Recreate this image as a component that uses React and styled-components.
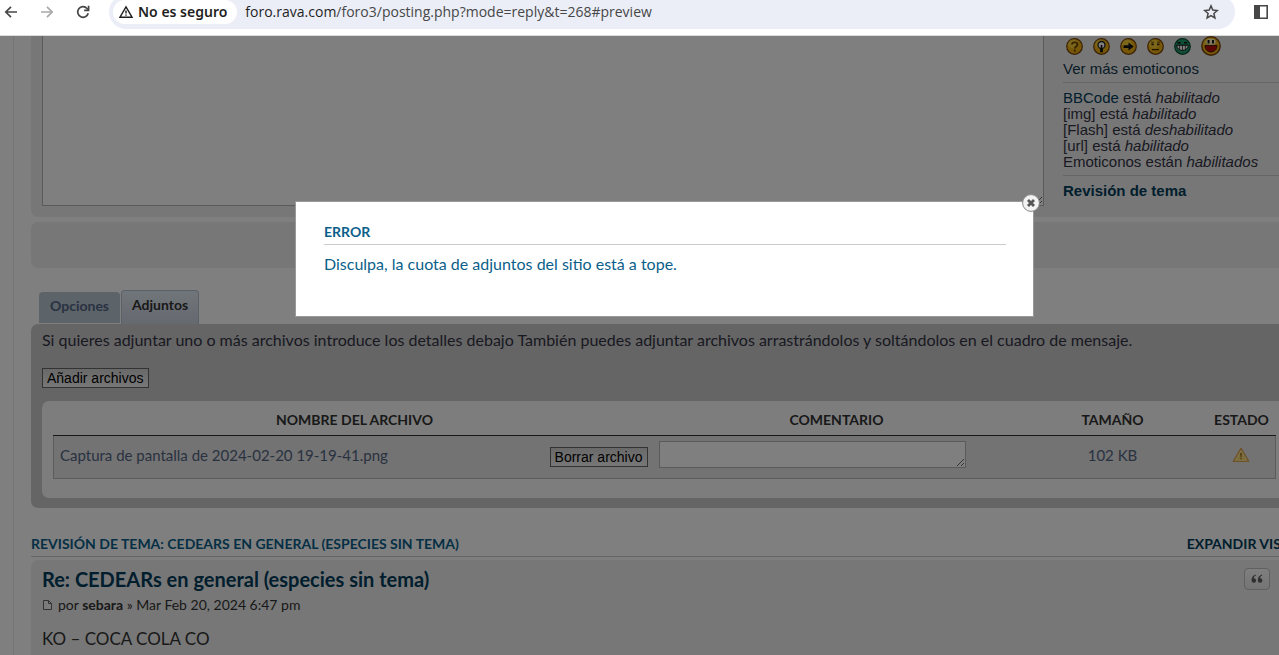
import React from "react";
import styled, { createGlobalStyle, css } from "styled-components";

const EMOTICONS = ["question", "idea", "arrow", "neutral", "mrgreen", "biggrin"];

const STATUS = [
    { name: "BBCode", link: true, verb: "está", value: "habilitado" },
    { name: "[img]", verb: "está", value: "habilitado" },
    { name: "[Flash]", verb: "está", value: "deshabilitado" },
    { name: "[url]", verb: "está", value: "habilitado" },
    { name: "Emoticonos", verb: "están", value: "habilitados" },
];

const FILES = [
    { name: "Captura de pantalla de 2024-02-20 19-19-41.png", size: "102 KB" },
];

function Emoticon({ kind }) {
    const big = kind === "biggrin";
    const size = big ? 20 : 17;
    return (
        <svg width={size} height={size} viewBox="0 0 17 17" aria-hidden="true">
            <circle cx="8.5" cy="8.5" r="7.8" fill={kind === "mrgreen" ? "#1d9e6c" : "#eeb010"} stroke={kind === "mrgreen" ? "#0d4a38" : "#74420c"} strokeWidth="1.2" />
            {kind !== "mrgreen" && <ellipse cx="7" cy="6" rx="5" ry="4.4" fill="#ffe04a" opacity="0.6" />}
            {kind === "question" && (
                <>
                    <path d="M6 6.6c0-3 5.4-3 5.4 0 0 2-2.6 1.8-2.6 4" fill="none" stroke="#6b4705" strokeWidth="1.9" />
                    <path d="M7.8 11.6h2v2h-2z" fill="#6b4705" />
                </>
            )}
            {kind === "idea" && (
                <>
                    <circle cx="8.5" cy="7" r="3.5" fill="#fff" stroke="#222" strokeWidth="1.3" />
                    <path d="M8.5 7v7M7 11.5h3M7 13.4h3" stroke="#111" strokeWidth="1.6" />
                </>
            )}
            {kind === "arrow" && <path d="M3.5 7.3h5V4.6l5.2 4-5.2 4V9.9h-5z" fill="#111" />}
            {kind === "neutral" && <path d="M4.4 5.6h2.4v1.6H4.4zM10 5.6h2.4v1.6H10zM5 11h7v1.2H5zM4 3.8h3v.8H4zM10 3.8h3v.8h-3z" fill="#3a2804" />}
            {kind === "mrgreen" && (
                <>
                    <path d="M3.5 4h3.2v1.6H3.5zM10 4h3.2v1.6H10z" fill="#111" />
                    <path d="M2.7 7.2h11.6c0 7-11.6 7-11.6 0z" fill="#fff" stroke="#111" />
                    <path d="M5.6 7v4.6M8.5 7v5.3M11.4 7v4.6" stroke="#111" strokeWidth="0.7" />
                </>
            )}
            {big && (
                <>
                    <ellipse cx="8.5" cy="5" rx="4" ry="2.6" fill="#fff3c0" />
                    <path d="M5.6 3.4h1.6v3H5.6zM9.4 3.4H11v3H9.4z" fill="#111" />
                    <path d="M3.4 8h10.2c0 7.4-10.2 7.4-10.2 0z" fill="#b80d0d" stroke="#3d1400" strokeWidth="0.8" />
                </>
            )}
        </svg>
    );
}

function App() {
    return (
        <Page>
            <GlobalStyle />
            <Toolbar>
                <ToolButton aria-label="Atrás">
                    <svg width="16" height="16" viewBox="0 0 16 16" fill="none" stroke="#474747" strokeWidth="1.7">
                        <path d="M14 8H3M8 2.8 2.8 8 8 13.2" />
                    </svg>
                </ToolButton>
                <ToolButton aria-label="Adelante" disabled>
                    <svg width="16" height="16" viewBox="0 0 16 16" fill="none" stroke="#a9a9a9" strokeWidth="1.7">
                        <path d="M2 8h11M8 2.8 13.2 8 8 13.2" />
                    </svg>
                </ToolButton>
                <ToolButton aria-label="Recargar">
                    <svg width="16" height="16" viewBox="0 0 16 16" fill="none" stroke="#474747" strokeWidth="1.7">
                        <path d="M13.2 9.2A5.3 5.3 0 1 1 12 4.5l1.4 1.4" />
                        <path d="M13.6 1.8v4.5H9.1" />
                    </svg>
                </ToolButton>
                <AddressBar>
                    <SecurityChip>
                        <svg width="14" height="14" viewBox="0 0 14 14" fill="none" stroke="#1f1f1f" strokeWidth="1.4">
                            <path d="M7 1.8 13 12.2H1z" />
                            <path d="M7 5.4v3M7 9.4v1.4" />
                        </svg>
                        No es seguro
                    </SecurityChip>
                    <Url>
                        <b>foro.rava.com</b>/foro3/posting.php?mode=reply&amp;t=268#preview
                    </Url>
                    <ToolButton aria-label="Añadir a marcadores">
                        <svg width="16" height="16" viewBox="0 0 16 16" fill="none" stroke="#474747" strokeWidth="1.5">
                            <path d="m8 1.9 1.8 4.2 4.5.4-3.4 3 1 4.4L8 11.6l-3.9 2.3 1-4.4-3.4-3 4.5-.4z" />
                        </svg>
                    </ToolButton>
                </AddressBar>
                <ToolButton aria-label="Panel lateral">
                    <svg width="16" height="16" viewBox="0 0 16 16">
                        <path d="M1.8 1.8h12.4v12.4H1.8z" fill="none" stroke="#474747" strokeWidth="1.6" />
                        <path d="M1 1h6v14H1z" fill="#474747" />
                    </svg>
                </ToolButton>
            </Toolbar>
            <Viewport>
                <Forum>
                    <Panel $flatTop>
                        <Editor>
                            <MessageBox aria-label="Mensaje" />
                            <Sidebar>
                                <Smilies>
                                    {EMOTICONS.map((kind) => (
                                        <Emoticon key={kind} kind={kind} />
                                    ))}
                                </Smilies>
                                <SideLink href="#smilies">Ver más emoticonos</SideLink>
                                <Divider />
                                <StatusList>
                                    {STATUS.map((s) => (
                                        <li key={s.name}>
                                            {s.link ? <a href="#bbcode">{s.name}</a> : s.name} {s.verb} <em>{s.value}</em>
                                        </li>
                                    ))}
                                </StatusList>
                                <Divider />
                                <SideLink href="#review" $bold>Revisión de tema</SideLink>
                            </Sidebar>
                        </Editor>
                    </Panel>
                    <SubmitPanel />
                    <Tabs>
                        <Tab>Opciones</Tab>
                        <Tab $active>Adjuntos</Tab>
                    </Tabs>
                    <AttachPanel>
                        <p>
                            Si quieres adjuntar uno o más archivos introduce los detalles debajo También puedes adjuntar archivos arrastrándolos y soltándolos en el cuadro de mensaje.
                        </p>
                        <FormButton>Añadir archivos</FormButton>
                        <FileBox>
                            <FileTable>
                                <colgroup>
                                    <col />
                                    <col width="362" />
                                    <col width="190" />
                                    <col width="68" />
                                </colgroup>
                                <thead>
                                    <tr>
                                        <th>Nombre del archivo</th>
                                        <th>Comentario</th>
                                        <th>Tamaño</th>
                                        <th>Estado</th>
                                    </tr>
                                </thead>
                                <tbody>
                                    {FILES.map((file) => (
                                        <tr key={file.name}>
                                            <td>
                                                <FileName>
                                                    <span>{file.name}</span>
                                                    <FormButton>Borrar archivo</FormButton>
                                                </FileName>
                                            </td>
                                            <td>
                                                <Comment aria-label="Comentario" />
                                            </td>
                                            <Centered>{file.size}</Centered>
                                            <Centered>
                                                <svg width="18" height="16" viewBox="0 0 18 16" role="img" aria-label="Error">
                                                    <path d="M9 1.4 16.6 14.4H1.4z" fill="#f6d873" stroke="#dda44e" strokeWidth="1.4" strokeLinejoin="round" />
                                                    <path d="M9 3.6 14.6 13.2H3.4z" fill="none" stroke="#fff0b0" strokeWidth="0.8" />
                                                    <path d="M8 6h2l-.3 4H8.3zM8.2 10.8h1.6v1.5H8.2z" fill="#a8802a" />
                                                </svg>
                                            </Centered>
                                        </tr>
                                    ))}
                                </tbody>
                            </FileTable>
                        </FileBox>
                    </AttachPanel>
                    <ReviewHeader>
                        <h3>Revisión de tema: CEDEARs en general (especies sin tema)</h3>
                        <a href="#expand">Expandir vista</a>
                    </ReviewHeader>
                    <Post>
                        <div>
                            <PostTitle>
                                <a href="#post">Re: CEDEARs en general (especies sin tema)</a>
                            </PostTitle>
                            <Author>
                                <svg width="9" height="10" viewBox="0 0 9 10" fill="#f6f6f6" stroke="#666">
                                    <path d="M.5.5h5l3 3v6h-8zM5.5.5v3h3" />
                                </svg>
                                <span>
                                    por <b>sebara</b> » Mar Feb 20, 2024 6:47 pm
                                </span>
                            </Author>
                            <PostBody>KO – COCA COLA CO</PostBody>
                        </div>
                        <QuoteButton aria-label="Citar">
                            <svg width="12" height="10" viewBox="0 0 12 10" fill="#606060">
                                <path d="M4.6.5C1.8 1.5.5 3.5.5 6.5a2.3 2.3 0 1 0 2.3-2.3c0-1.2.7-2.1 2.1-2.7zM10.9.5C8.1 1.5 6.8 3.5 6.8 6.5a2.3 2.3 0 1 0 2.3-2.3c0-1.2.7-2.1 2.1-2.7z" />
                            </svg>
                        </QuoteButton>
                    </Post>
                </Forum>
                <Shade />
                <ModalLayer>
                    <Modal role="dialog" aria-labelledby="alert-title">
                        <CloseButton aria-label="Cerrar">
                            <svg width="18" height="18" viewBox="0 0 18 18">
                                <circle cx="9" cy="9" r="8.4" fill="#f2f2f2" stroke="#888" />
                                <path d="m6 6 6 6M12 6l-6 6" stroke="#555" strokeWidth="2.8" />
                            </svg>
                        </CloseButton>
                        <h3 id="alert-title">Error</h3>
                        <p>Disculpa, la cuota de adjuntos del sitio está a tope.</p>
                    </Modal>
                </ModalLayer>
            </Viewport>
        </Page>
    );
}

export default App;

const GlobalStyle = createGlobalStyle`
* {
    box-sizing: border-box;
}
body {
    margin: 0;
    overflow: hidden;
}
h3, p, ul {
    margin: 0;
    padding: 0;
}
a {
    color: inherit;
    text-decoration: none;
}
`;
const Page = styled.div`
    display: flex;
    flex-direction: column;
    height: 100vh;
    font-family: Lato, sans-serif;
    color: #333344;
`;
const Toolbar = styled.header`
    display: flex;
    align-items: center;
    flex: none;
    gap: 20px;
    height: 36px;
    padding: 0 10px 12px 3px;
    background: #fff;
    border-bottom: 1px solid #dcdcdc;
    font-family: "Noto Sans", "Open Sans", sans-serif;
    font-size: 14px;
`;
const ToolButton = styled.button`
    display: flex;
    flex: none;
    padding: 0;
    border: none;
    background: none;
`;
const AddressBar = styled.div`
    display: flex;
    align-items: center;
    flex: 1;
    height: 34px;
    margin-left: -2px;
    margin-right: -2px;
    padding: 0 16px 0 4px;
    border-radius: 17px;
    background: #ebeef7;
`;
const SecurityChip = styled.span`
    display: flex;
    align-items: center;
    gap: 5px;
    height: 24px;
    padding: 0 10px 0 6px;
    border-radius: 12px;
    background: #fff;
    color: #1f1f1f;
    font-weight: 600;
`;
const Url = styled.span`
    flex: 1;
    margin-left: 8px;
    color: #474747;
    font-family: "Open Sans", "Noto Sans", sans-serif;
    b {
        color: #1f1f1f;
        font-weight: 400;
    }
`;
const Viewport = styled.main`
    position: relative;
    flex: 1;
    overflow: hidden;
    background: #fff;
`;
/* The forum is a little wider than the window and runs out on the right */
const Forum = styled.div`
    margin: 0 -19px 0 13px;
    padding-left: 17px;
    border-left: 1px solid #ececec;
`;
const Panel = styled.section`
    padding: 0 11px;
    border-radius: ${(props) => (props.$flatTop ? "0 0 7px 7px" : "7px")};
    background: #efefef;
`;
const Editor = styled.div`
    display: flex;
    gap: 19px;
    height: 181px;
    font-family: "Liberation Sans", Arial, sans-serif;
    font-size: 15px;
    line-height: 16px;
`;
const MessageBox = styled.textarea`
    flex: 1;
    height: 170px;
    border: 1px solid #b4b4b4;
    border-top: none;
    background: #fff;
`;
const Sidebar = styled.aside`
    width: 224px;
`;
const Smilies = styled.div`
    display: flex;
    align-items: center;
    gap: 10px;
    height: 20px;
    padding-left: 3px;
`;
const SideLink = styled.a`
    display: block;
    padding: ${(props) => (props.$bold ? "7px 0" : "5px 0")};
    color: ${(props) => (props.$bold ? "#003c5a" : "#12384c")};
    font-weight: ${(props) => (props.$bold ? 700 : 400)};
`;
const Divider = styled.hr`
    margin: 0;
    border: none;
    border-top: 1px solid #ccc;
`;
const StatusList = styled.ul`
    padding: 7px 0 5px;
    list-style: none;
    a {
        color: #003c5a;
    }
`;
const SubmitPanel = styled(Panel)`
    height: 46px;
    margin-top: 5px;
`;
const Tabs = styled.nav`
    display: flex;
    align-items: flex-end;
    gap: 1px;
    height: 34px;
    margin-top: 22px;
    padding-left: 8px;
`;
const Tab = styled.button`
    height: 31px;
    margin-bottom: 1px;
    padding: 0 11px 4px;
    border: none;
    border-radius: 4px 4px 0 0;
    background: #b8c6d3;
    color: #536482;
    font: 700 14px Lato, sans-serif;
    ${(props) =>
        props.$active &&
        css`
            height: 34px;
            margin-bottom: 0;
            padding: 0 10px 6px;
            border: 1px solid #b3c4d3;
            border-bottom: none;
            background: linear-gradient(#e2ecf4, #cad2e0);
            color: #333;
        `}
`;
const AttachPanel = styled(Panel)`
    padding: 6px 11px 10px;
    background: #cacaca;
    p {
        margin-bottom: 17px;
        font-size: 16px;
        line-height: 20px;
        white-space: nowrap;
    }
`;
const FormButton = styled.button`
    height: 20px;
    padding: 0 4px;
    border: 1px solid #666;
    background: linear-gradient(#d2d2d2, #efefef);
    color: #000;
    font: 14px "Liberation Sans", Arial, sans-serif;
    white-space: nowrap;
`;
const FileBox = styled.div`
    margin-top: 13px;
    padding: 5px 11px 19px;
    border-radius: 7px;
    background: #fafafa;
`;
const FileTable = styled.table`
    width: 100%;
    border-collapse: collapse;
    table-layout: fixed;
    font-size: 15px;
    th {
        height: 29px;
        padding: 0 0 2px;
        border-bottom: 1px solid #333;
        color: #333;
        font-size: 14px;
        text-transform: uppercase;
    }
    tbody tr {
        height: 43px;
        border: 1px solid #b8b8b8;
        border-top: none;
        background: #e6e6e6;
        color: #536482;
    }
    td {
        padding: 0 3px;
    }
`;
const FileName = styled.div`
    display: flex;
    align-items: center;
    justify-content: space-between;
    padding: 0 5px 0 3px;
    span {
        padding-bottom: 4px;
    }
`;
const Comment = styled.textarea`
    display: block;
    width: 307px;
    height: 27px;
    margin-bottom: 5px;
    border: 1px solid #b4b4b4;
    background: #fff;
`;
const Centered = styled.td`
    && {
        padding-bottom: 4px;
    }
    text-align: center;
    svg {
        display: block;
        margin: 0 auto;
    }
`;
const ReviewHeader = styled.div`
    display: flex;
    justify-content: space-between;
    margin: 26px 0 3px;
    padding-bottom: 2px;
    border-bottom: 1px solid #ccc;
    color: #0b5f8a;
    font-size: 14px;
    font-weight: 700;
    line-height: 20px;
    text-transform: uppercase;
    h3 {
        font-size: 14px;
    }
    a {
        color: #003c5a;
    }
`;
const Post = styled(Panel)`
    display: flex;
    justify-content: space-between;
    align-items: flex-start;
    min-height: 120px;
    padding: 8px 28px 0 11px;
`;
const PostTitle = styled.h3`
    color: #003c5a;
    font-size: 20px;
    line-height: 22px;
`;
const Author = styled.p`
    display: flex;
    align-items: center;
    gap: 6px;
    padding-left: 1px;
    margin-top: 5px;
    font-size: 14px;
    line-height: 20px;
    color: #333;
`;
const PostBody = styled.p`
    margin-top: 13px;
    color: #333;
    font-size: 17px;
    line-height: 22px;
`;
const QuoteButton = styled.button`
    display: flex;
    align-items: center;
    justify-content: center;
    width: 26px;
    height: 22px;
    padding: 0;
    border: 1px solid #c0c0c0;
    border-radius: 4px;
    background: linear-gradient(#fff, #e9e9e9);
`;
const Shade = styled.div`
    position: absolute;
    inset: 0;
    background: rgba(0, 0, 0, 0.5);
`;
const ModalLayer = styled.div`
    position: absolute;
    inset: 0 -50px 0 0;
    display: flex;
    align-items: flex-start;
    justify-content: center;
    padding-top: 165px;
`;
const Modal = styled.div`
    position: relative;
    width: 739px;
    padding: 19px 27px 42px 28px;
    border: 1px solid #999;
    background: #fff;
    color: #0b5f8a;
    h3 {
        padding-bottom: 2px;
        border-bottom: 1px solid #ccc;
        font-size: 14px;
        line-height: 21px;
        text-transform: uppercase;
    }
    p {
        margin-top: 9px;
        font-size: 16px;
        line-height: 20px;
    }
`;
const CloseButton = styled.button`
    position: absolute;
    top: -8px;
    right: -7px;
    display: flex;
    padding: 0;
    border: none;
    background: none;
`;
